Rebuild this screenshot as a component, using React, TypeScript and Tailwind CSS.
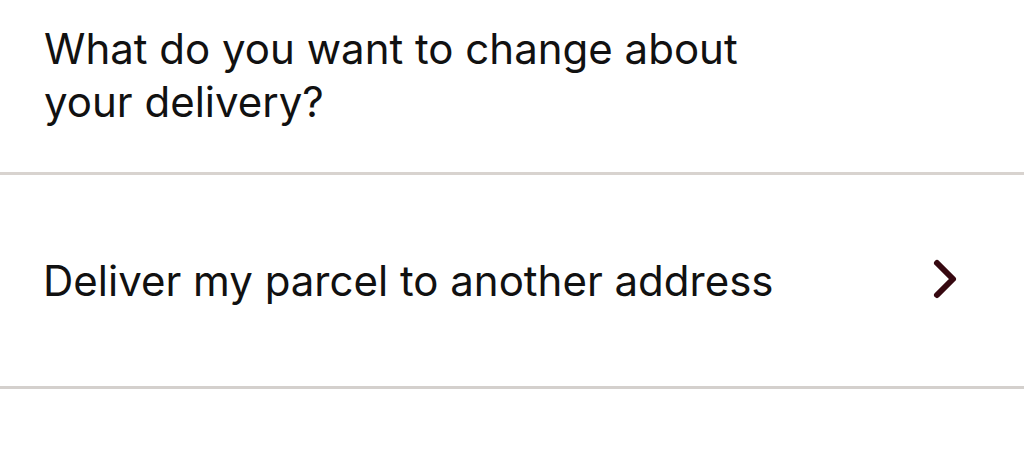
import React from "react";

export default function App() {
  return (
    <div
      className="w-[1024px] h-[463px] bg-white overflow-hidden text-[#111]"
      style={{ fontFamily: "Inter, 'Noto Sans', sans-serif" }}
    >
      <div className="pl-[44px] pt-[22px] pb-[44px] text-[42px] leading-[53px]">
        What do you want to change about
        <br />
        your delivery?
      </div>
      <div className="h-[3px] bg-[#d8d3cf]" />
      <div className="h-[211px] flex items-center justify-between pl-[43px] pr-[64px]">
        <span className="text-[42px] leading-[53px]">
          Deliver my parcel to another address
        </span>
        <svg width="28" height="42" viewBox="0 0 28 42" fill="none" className="-mt-[4px]">
          <path
            d="M5 5 L21 21 L5 37"
            stroke="#360810"
            strokeWidth="6"
            strokeLinecap="round"
            strokeLinejoin="round"
          />
        </svg>
      </div>
      <div className="h-[3px] bg-[#d4d0cd]" />
    </div>
  );
}
